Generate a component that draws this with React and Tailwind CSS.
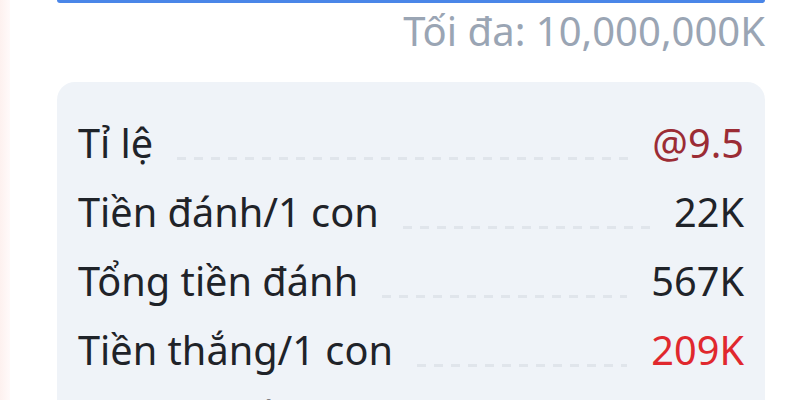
import React from "react";

const rows = [
  { label: "Tỉ lệ", value: "@9.5", color: "text-[#9b2c35]" },
  { label: "Tiền đánh/1 con", value: "22K", color: "text-[#1f2329]" },
  { label: "Tổng tiền đánh", value: "567K", color: "text-[#1f2329]" },
  { label: "Tiền thắng/1 con", value: "209K", color: "text-[#e0282e]" },
  { label: "Số tiền thắng", value: "5,434K", color: "text-[#e0282e]" },
];

const App = () => {
  return (
    <div
      className="relative flex h-[400px] w-[800px] overflow-hidden bg-white"
      style={{ fontFamily: '"Noto Sans", "Open Sans", sans-serif' }}
    >
      {/* faint strip on the left edge */}
      <div className="w-[10px] shrink-0 bg-gradient-to-r from-[#fdf1ef] to-[#fffafa]" />

      <div className="flex-1 pl-[47px] pr-[35px]">
        {/* bottom of the amount input */}
        <div className="h-[3px] rounded-b-[3px] bg-[#4a86e8]" />

        <div className="mt-[6px] text-right text-[40px] leading-[44px] text-[#9aa5b4]">
          Tối đa: 10,000,000K
        </div>

        <div className="mt-[29px] rounded-[18px] bg-[#eff3f8] px-[21px] pt-[27px] pb-4">
          {rows.map((row) => (
            <div key={row.label} className="flex h-[69px] items-center">
              <span className="text-[39.7px] leading-[69px] text-[#1f2329]">
                {row.label}
              </span>
              <div className="mx-[24px] mt-[30px] h-[3px] flex-1 bg-[repeating-linear-gradient(to_right,#e0e5eb_0_9px,transparent_9px_17px)]" />
              <span className={`text-[39.7px] leading-[69px] ${row.color}`}>
                {row.value}
              </span>
            </div>
          ))}
        </div>
      </div>
    </div>
  );
};

export default App;
